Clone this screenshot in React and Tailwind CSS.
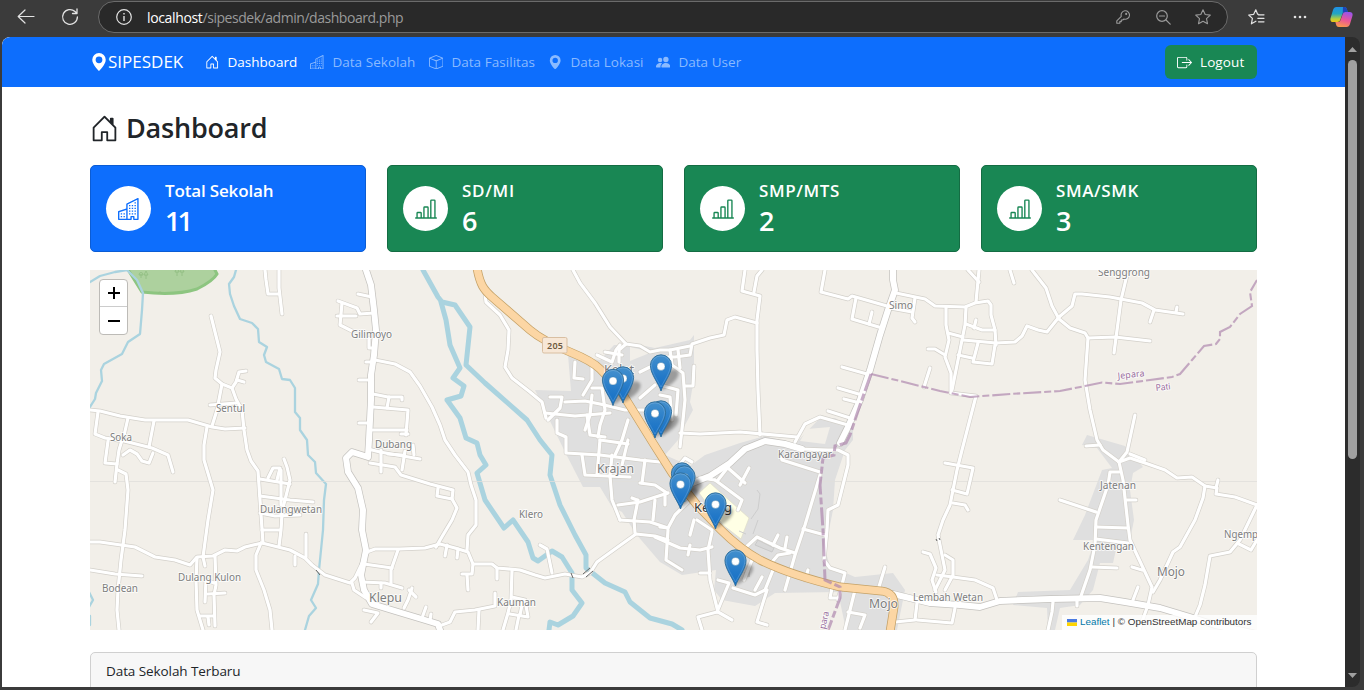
import React from "react";
import {
  BsHouseDoor,
  BsBuildings,
  BsBox,
  BsGeoAltFill,
  BsBoxArrowRight,
  BsBarChartLine,
} from "react-icons/bs";

const urban = [
  "535,390 571,391 568,355 600,360 614,345 640,345 655,348 690,340 694,335 694,378 690,402 693,410 685,425 678,440 665,455 690,466 705,455 740,443 765,436 795,444 820,418 835,418 853,428 853,440 845,450 835,480 833,510 825,550 830,566 855,577 893,573 905,590 897,630 846,630 838,592 775,593 755,606 722,600 714,590 716,570 682,575 660,562 636,534 622,512 612,507 600,487 583,487 565,452",
  "1082,445 1087,435 1125,446 1143,467 1133,473 1130,490 1134,520 1130,540 1117,545 1113,563 1100,563 1093,590 1080,605 1060,608 1055,630 1048,630 1047,608 1013,605 1018,592 1070,590 1088,560 1095,540 1073,540 1085,515 1102,470 1112,468 1097,448",
];

const streams = [
  "90,282 100,276 115,272 127,270 137,280 143,293 142,310 140,334 128,342 122,354 104,364 101,370 102,381 96,393 95,399 90,407",
  "236,270 234,277 229,284 230,294 234,306 240,319 252,323 258,329 259,342 267,347 264,355 266,362 279,369 282,379 290,380 295,388 295,412 300,418 300,430 307,440 308,455 315,462 316,473 326,484 324,500 323,530 319,570 318,584 311,600 316,608 309,616 305,630",
  "88,590 93,600 89,607",
  "90,616 90,625",
];

const rivers = [
  "423,270 438,297 442,302 455,305 470,327 466,365 485,383 527,420 540,440 552,455 550,475 560,505 575,535 586,555 586,568 605,583 625,592 630,602 650,618 672,624 682,630",
  "441,302 446,320 450,345 460,368 453,378 464,386 461,396 447,400 460,418 466,438 477,443 480,455 486,465 477,473 485,500 504,528 513,520 528,542 533,558 538,561 552,551 562,557 572,573 572,590 582,603 573,616 558,625 550,622 549,630",
];

const minor = [
  "265,270 266,280 268,294 279,294", "279,270 279,288 282,314",
  "211,316 217,340 220,352 216,370 215,378 222,384 232,388 236,399 242,410 244,430 247,450 251,461 258,471 260,500 263,543",
  "246,371 239,372 236,382 232,388", "244,382 237,380", "222,384 217,410 212,426", "210,405 236,403",
  "90,410 100,411 120,416 145,420 188,420 212,427 225,429 245,428",
  "98,412 95,434 105,438 124,441 152,448 168,455 173,472", "128,418 123,440", "154,421 149,447",
  "207,427 204,445 204,460 213,490 208,520 203,557",
  "108,441 105,463 117,464 119,450 122,440", "117,464 115,482", "118,470 126,474 128,490 125,530 121,560 118,590 117,610 119,630",
  "123,455 130,450 137,454 142,461 149,463 153,453",
  "90,542 100,542 135,547 155,557 175,560 190,565 197,557 213,556 225,550 237,551 245,547 262,543 290,550 305,558 312,565 325,575 350,583 355,578 367,553",
  "90,570 115,574 142,576", "203,557 205,566", "197,558 196,580 197,610 203,630", "215,556 216,585 214,595 215,626",
  "205,602 206,580 214,583", "208,594 225,593", "200,616 214,616", "208,617 209,625",
  "261,543 256,555 256,570 264,590 270,610 272,630",
  "260,479 290,484", "260,496 290,500 313,502", "260,513 275,516 300,515", "282,514 281,530 279,546", "262,530 280,530",
  "284,459 287,467 290,480 285,500 281,515", "268,478 273,468 280,468 277,480", "281,470 281,505", "306,534 306,557", "295,556 295,565",
  "358,294 372,297", "338,301 357,308 360,314 374,313", "342,303 340,325 352,331", "337,316 356,316", "369,338 369,348 374,348",
  "366,362 374,362", "359,380 372,380", "359,423 370,423",
  "375,360 395,364 410,372 420,386 432,407 440,425 445,440 455,455 468,472 471,485 476,500 476,525 468,535 467,550",
  "373,394 388,397 402,397 402,400", "389,397 387,408", "373,407 408,410 406,435", "373,430 407,430", "401,434 408,434",
  "368,449 380,452 420,459", "370,463 395,467 401,475 430,484 453,490 452,499 437,496 438,488",
  "452,499 457,508 452,520 443,535 436,547", "381,450 381,472", "388,454 402,455", "405,451 402,470", "413,445 414,455",
  "367,552 375,549 400,549 425,548 440,544 455,548 468,552 473,564 492,564 497,568 520,570 535,575 545,578 565,574 582,577 590,573 597,562 615,549 636,534 655,536 668,540",
  "447,545 445,556", "458,549 457,558", "473,564 472,574 462,574", "467,575 468,590", "497,568 497,579", "512,571 511,600 508,613 503,630",
  "540,545 547,549 552,573", "442,625 450,622 455,612 475,610 495,606 495,593", "479,610 478,630", "512,597 525,600 528,617 510,614",
  "523,600 520,615", "519,615 516,630", "364,564 392,568", "398,550 391,570 391,583", "362,582 385,583 402,588", "381,583 381,588",
  "412,588 408,600 404,608", "409,590 416,597", "426,607 422,618", "431,614 430,620", "364,610 378,613 371,622", "352,583 354,590 366,598",
  "485,293 486,302 500,315 509,330 508,350 505,367 512,378 530,392 542,402 546,418",
  "573,270 580,283 595,303 610,327 626,344 640,346 650,352 660,350 670,350 690,346",
  "626,344 619,350 619,362",
  "745,270 742,291 760,296 757,320 757,350 758,390 760,435", "762,270 757,276 754,292",
  "757,323 735,317 727,320 724,335 710,338 692,344 690,355 675,357 665,357",
  "825,270 821,292 848,299 852,296 887,306", "856,298 852,319 882,328", "872,312 869,324", "842,367 867,374", "838,388 862,395",
  "844,399 856,402", "828,411 850,418", "795,442 805,424 820,417 848,425", "680,433 700,434 740,432 797,437",
  "896,293 925,299 935,306 965,307 975,303 988,301 991,305 991,315 995,330 996,345", "915,298 912,318 915,322", "890,308 912,312",
  "946,308 946,325 949,340 945,357 951,373 951,392", "948,333 963,337", "928,349 935,349 945,355", "930,368 924,387",
  "979,270 976,302", "968,270 979,282", "1010,270 1014,283",
  "1032,270 1046,288 1052,306 1059,319 1070,328 1085,333 1088,338 1085,380 1090,410 1097,440 1103,450 1119,462",
  "1059,317 1072,306 1075,294 1082,294 1110,297 1142,303 1155,310 1183,314", "1154,310 1150,322", "1177,307 1176,312",
  "1059,317 1047,332 1038,330 1027,326 1022,336 1015,342 996,343 963,340", "966,308 965,325 960,350 952,390",
  "966,324 982,330 995,330", "976,320 974,328", "978,343 973,362 992,364 995,345", "958,355 972,358",
  "951,393 976,396 962,450 957,470 950,505 943,520 938,535 941,550 945,570 935,590", "1127,275 1121,300 1114,353",
  "1088,338 1115,337 1150,341", "1135,415 1127,452 1119,462",
  "945,463 973,468 967,494 952,490", "953,503 965,505 968,510", "945,555 953,560 953,575 945,590", "923,552 930,554 936,568 932,580 936,592",
  "937,575 953,577 975,580 993,588 997,600",
  "1086,446 1100,445", "1119,462 1123,480 1128,525 1130,540 1152,587 1148,605 1139,630",
  "1119,472 1110,472 1108,485 1096,520 1095,545 1090,570 1081,596", "1060,500 1096,512", "1127,500 1136,500", "1096,527 1128,528",
  "1096,539 1128,543", "1092,567 1117,568", "1132,567 1142,570",
  "1119,462 1130,458 1145,463 1165,470 1177,478 1192,477 1205,486 1217,488 1216,494 1235,497 1257,505", "1130,454 1145,460", "1218,480 1216,488",
  "1205,486 1203,498 1195,520 1180,547 1173,552 1160,580 1153,592", "1257,505 1240,540 1230,552 1210,556 1205,585 1200,605 1195,617",
  "1239,544 1251,550 1257,540", "1138,587 1133,600", "1053,602 1052,612 1048,630", "1077,600 1077,606",
  "917,603 915,620 895,622", "917,620 952,623 955,608",
  "545,413 575,416 610,413", "550,397 562,397 560,408 548,420", "565,402 585,401 600,404 625,410 645,410",
  "557,420 557,433 566,437 566,453 600,455 640,460 660,462", "587,415 590,435 605,437", "592,395 590,415 585,430",
  "575,362 574,378 583,379", "592,362 592,380 583,395", "592,388 602,388 605,410 600,425 598,437", "597,355 612,362 616,350 620,345",
  "605,352 622,355", "628,420 622,440 615,455", "582,455 585,475 630,477", "600,440 597,475", "628,440 622,465", "600,440 628,444",
  "612,455 610,476 612,500 620,520", "640,483 655,485 667,493", "618,505 640,502 668,493", "638,500 634,520 635,533",
  "620,520 650,522 668,528", "655,500 653,520", "645,460 642,483", "665,493 665,505", "632,498 637,500",
  "670,350 672,365 683,373 685,400 683,420 680,447", "694,366 693,386 685,386", "660,385 678,390 676,415", "660,395 670,397 672,420", "678,350 680,368",
  "640,372 660,362", "640,398 655,385", "675,470 685,458 692,462", "715,480 742,500 738,510", "735,458 718,480", "749,468 740,485", "728,468 745,483", "700,478 715,480",
  "660,527 668,528 675,515 690,500", "655,537 680,548 700,550 712,547", "668,530 666,560 682,570", "694,520 690,535", "690,545 688,555",
  "697,520 712,530", "712,532 708,550 710,580 718,612 732,620", "700,573 710,573", "717,612 729,583 718,580", "717,612 698,617 702,630",
  "733,588 755,595 765,590 775,565", "752,560 744,580", "755,590 762,577", "767,590 757,622 767,625", "745,548 757,537 780,548 795,553",
  "773,545 778,535", "785,548 787,537", "785,590 795,555 805,525 820,475", "803,529 825,535", "780,452 782,460 820,472", "772,562 778,555 790,553",
  "805,580 808,570", "855,590 850,610 845,630", "878,590 885,567", "832,588 830,598 838,598", "848,612 865,615 860,628",
  "800,449 828,450 838,450 848,455 848,465 838,505 828,510 827,530 824,560 830,568 845,573 838,600",
];

const major = [
  "366,270 371,285 374,310 376,330 374,355 371,375 371,400 369,440 368,457 352,452 346,458 348,472 358,488 363,510 362,530 366,550 361,575 364,590 372,604 395,611 425,620 438,624 440,630",
  "893,268 893,280 895,290 888,310 880,335 870,370 860,400 848,427 840,443",
  "690,484 710,476 730,463 745,449 765,441 785,444 802,449",
  "893,594 930,603 960,605 980,607 1000,601 1050,599 1100,598 1125,602 1160,608 1190,617 1215,625 1257,634",
];

const trunk =
  "M477,268 C480,285 484,290 492,297 L530,330 Q543,341 570,352 Q592,361 600,369 Q612,381 622,393 L653,443 L672,473 L697,505 L721,530 Q740,549 760,560 Q790,575 840,587 L882,591 Q895,593 894,607 L890,632";

const labels = [
  ["Soka", 110, 441, 22, 10], ["Sentul", 216, 412, 29, 10], ["Dulangwetan", 260, 513, 62, 10], ["Dulang Kulon", 178, 581, 63, 10],
  ["Bodean", 102, 592, 36, 10], ["Gilimoyo", 351, 338, 41, 10], ["Dubang", 375, 448, 37, 10], ["Krajan", 597, 473, 37, 12],
  ["Klero", 519, 518, 24, 10], ["Klepu", 369, 602, 33, 13], ["Kauman", 497, 606, 39, 10], ["Kelet", 604, 374, 30, 12],
  ["Karangayar", 778, 458, 54, 10], ["Simo", 889, 309, 24, 10], ["Senggrong", 1098, 276, 52, 10],
  ["Jatenan", 1100, 489, 36, 10], ["Kentengan", 1083, 550, 51, 10], ["Ngemp", 1224, 538, 34, 10], ["Mojo", 1157, 576, 28, 13],
  ["Mojo", 869, 608, 29, 13], ["Lembah Wetan", 913, 601, 70, 10],
];

const markers = [
  [661, 391], [623, 403], [613, 405.5], [661, 437], [655, 438], [682, 499], [684.5, 502], [680.5, 509], [715.5, 529], [735.5, 586],
];

function Lines({ items, className, width }) {
  return items.map((p, i) => (
    <polyline key={i} points={p} className={className} strokeWidth={width} fill="none" strokeLinecap="round" strokeLinejoin="round" />
  ));
}

function VillageMap() {
  return (
    <svg viewBox="90 270 1167 360" className="block h-full w-full" fontFamily="'Noto Sans', sans-serif">
      <defs>
        <linearGradient id="pin" x1="0" y1="0" x2="0" y2="1">
          <stop offset="0" stopColor="#4490cd" />
          <stop offset="0.6" stopColor="#2379c8" />
          <stop offset="1" stopColor="#126fc6" />
        </linearGradient>
        <filter id="soft" x="-30%" y="-30%" width="160%" height="160%">
          <feGaussianBlur stdDeviation="1.6" />
        </filter>
      </defs>
      <rect x="90" y="270" width="1167" height="360" fill="#f2efe9" />
      {urban.map((p) => <polygon key={p} points={p} fill="#dfdfdf" />)}
      <polygon points="807,429 830,427 825,444 800,441" fill="#f2efe9" />
      <polygon points="630,347 652,352 630,361" fill="#f2efe9" />
      <path d="M127,268 L142,292 Q175,296 197,289 Q213,281 217,274 L214,268Z" fill="#add19e" stroke="#8dc580" strokeWidth="3" />
      <g stroke="#8fbd80" fill="none" strokeWidth="0.8">
        <path d="M141,278v-4m-2,1a2,2.5 0 1 1 4,0zM146,279v-4m-2,0l2,-4 2,4zM177,276v-4m-2,0a2,2.5 0 1 1 4,0zM182,276v-4m-2,0l2,-4 2,4zM158,294a2,2 0 0 1 4,0" />
      </g>
      <polygon points="710,483 749,518 741,539 723,525 699,493" fill="#ffffe5" stroke="#dedcc8" strokeWidth="0.7" />
      <path d="M757,490l3,4-2,15-7,10M758,520l-5,14M746,534l-7,-3" stroke="#cdcdcd" fill="none" strokeWidth="1" />
      <path d="M755,545l3,-5 16,8-2,4z" stroke="#c4c4c4" fill="#d8d8d8" strokeWidth="0.8" />
      <rect x="744" y="572" width="6" height="5" fill="#c3c3c3" />
      <Lines items={streams} className="stroke-[#aad3df]" width="2.3" />
      <Lines items={rivers} className="stroke-[#aad3df]" width="5" />
      <path d="M90,481.5H1257" stroke="#dfdedb" strokeWidth="0.8" />
      <Lines items={minor} className="stroke-[#d3d0ca]" width="4.5" />
      <Lines items={major} className="stroke-[#c4c2be]" width="7.4" />
      <Lines items={minor} className="stroke-white" width="3.2" />
      <Lines items={major} className="stroke-white" width="6" />
      <path d="M583,574l7,-6M586,577l7,-6M571,573l2,5M316,570l4,5M936,539l1,2M939,538l1,2" stroke="#666" strokeWidth="1" fill="none" />
      <path d={trunk} fill="none" stroke="#c4a166" strokeWidth="8.8" />
      <path d={trunk} fill="none" stroke="#fcd6a4" strokeWidth="7.3" />
      <g fill="none" stroke="#ad85ad" strokeOpacity="0.68" strokeWidth="2.1">
        <polyline strokeDasharray="18 3 7 3" points="871,374 900,381 940,391 970,397 1010,394 1060,391 1085,386 1102,382.5 1120,384 1150,380 1172,377 1180,374 1192,360 1204,346 1216,344 1220,339 1220,332 1230,327 1240,314 1252,306 1250,292 1257,280" />
        <polyline strokeDasharray="18 3 7 3" strokeWidth="3" points="871,374 860,405 850,435 846,443 835,446 834,455 823,458 820,485 823,530 825,580 840,587 840,598 830,625 828,630" />
      </g>
      <g fill="#7d7d7d" stroke="#fff" strokeOpacity="0.75" strokeWidth="1.8" paintOrder="stroke" strokeLinejoin="round">
        {labels.map(([t, x, y, w, s]) => (
          <text key={t + x} x={x} y={y} fontSize={s} textLength={w} lengthAdjust="spacingAndGlyphs">{t}</text>
        ))}
        <text x="694" y="512" fontSize="13" textLength="38" lengthAdjust="spacingAndGlyphs" fill="#3a3a3a">Keling</text>
        <g fill="#9b70a0" fontSize="9">
          <text transform="translate(1118 379) rotate(-6)" textLength="27">Jepara</text>
          <text transform="translate(1156 391) rotate(-7)" textLength="15">Pati</text>
          <text transform="translate(825 629.5) rotate(-77)" textLength="18">para</text>
        </g>
      </g>
      <rect x="542.5" y="337.5" width="24.5" height="15.5" rx="1.5" fill="#f7e7d6" stroke="#d9bfa2" />
      <text x="547" y="349" fontSize="9" fontWeight="600" fill="#6f5a40" textLength="16">205</text>
      {markers.map(([x, y]) => (
        <path key={"s" + x + y} d={`M${x},${y} l6,-4 q14,-9 11,-16 q-6,-5 -13,4 z`} fill="#000" opacity="0.3" filter="url(#soft)" />
      ))}
      {markers.map(([x, y]) => (
        <g key={x + "-" + y} transform={`translate(${x} ${y})`}>
          <path d="M0,0 C-2,-7 -10.6,-17 -10.6,-25.6 A10.6,10.6 0 0 1 10.6,-25.6 C10.6,-17 2,-7 0,0Z" fill="url(#pin)" stroke="#2e6c97" strokeWidth="0.9" />
          <path d="M0,-4 C-3,-10 -9.5,-19 -9.5,-25.6 A9.5,9.5 0 0 1 9.5,-25.6 C9.5,-19 3,-10 0,-4Z" fill="none" stroke="#fff" strokeOpacity="0.16" />
          <circle cy="-24.6" r="4" fill="#fff" stroke="#2e6c97" strokeOpacity="0.6" strokeWidth="0.6" />
        </g>
      ))}
    </svg>
  );
}

function Toolbar() {
  return (
    <div className="flex h-[37px] shrink-0 items-start bg-[#3b3b3b] text-[#e3e3e3]">
      <svg className="ml-[17px] mt-[9px] h-4 w-[18px]" viewBox="0 0 18 16" fill="none" stroke="currentColor" strokeWidth="1.2" strokeLinecap="round" strokeLinejoin="round">
        <path d="M17 7.5H1.2M8 1L1.2 7.5 8 14" />
      </svg>
      <svg className="ml-[26px] mt-2 h-[18px] w-[18px]" viewBox="0 0 18 18" fill="none" stroke="currentColor" strokeWidth="1.3" strokeLinecap="round" strokeLinejoin="round">
        <path d="M16.4 9A7.4 7.4 0 1 1 14 3.5L15.8 5.2M16 1v4.5h-4.5" />
      </svg>
      <div className="ml-[19px] mt-px flex h-8 w-[1130px] items-center rounded-full border border-[#6b6b6b] bg-[#292929] pr-4">
        <svg className="ml-[17px] h-4 w-4" viewBox="0 0 16 16" fill="none" stroke="currentColor" strokeWidth="1.2">
          <circle cx="8" cy="8" r="7.3" />
          <path d="M8 7v5M8 4v1.5" strokeWidth="1.4" />
        </svg>
        <div className="ml-[15px] flex-1 whitespace-nowrap text-[14px] tracking-[-0.46px] text-[#9a9a9a]">
          <span className="tracking-[-0.35px] text-white">localhost</span>/sipesdek/admin/dashboard.php
        </div>
        <svg className="h-[14px] w-[14px] text-[#9a9a9a]" viewBox="0 0 14 14" fill="none" stroke="currentColor" strokeWidth="1.1" strokeLinejoin="round">
          <path d="M5.3 6.3A4.2 4.2 0 1 1 8 9L6.700 10H5.300v1.600H3.800V13.200H.8V10.800z" />
          <circle cx="10.2" cy="3.9" r=".5" fill="currentColor" />
        </svg>
        <svg className="ml-[26px] h-[15px] w-[15px] text-[#9a9a9a]" viewBox="0 0 15 15" fill="none" stroke="currentColor" strokeWidth="1.2" strokeLinecap="round">
          <circle cx="6" cy="6" r="5.3" />
          <path d="M3.5 6h5M10 10l4.2 4.2" />
        </svg>
        <svg className="ml-[24px] h-4 w-4 text-[#9a9a9a]" viewBox="0 0 16 16" fill="none" stroke="currentColor" strokeWidth="1.1" strokeLinejoin="round">
          <path d="M8 .8l2.2 4.7 5.1.6-3.8 3.5 1 5.1L8 12.2l-4.5 2.5 1-5.1L.7 6.1l5.1-.6z" />
        </svg>
      </div>
      <svg className="ml-[20px] mt-[9px] h-4 w-[17px]" viewBox="0 0 17 16" fill="none" stroke="currentColor" strokeWidth="1.2" strokeLinejoin="round" strokeLinecap="round">
        <path d="M11 5.5L9.6 5.2 7.8.8 5.7 5.3.7 6l3.7 3.4-1 5.4 4.5-2.6M10.5 5.8H16M9.8 9.3H16M10.5 12.8H16" />
      </svg>
      <svg className="ml-[28px] mt-[15px] h-1 w-[14px]" viewBox="0 0 14 4" fill="currentColor">
        <circle cx="2" cy="2" r="1.3" /><circle cx="7" cy="2" r="1.3" /><circle cx="12" cy="2" r="1.3" />
      </svg>
      <svg className="ml-[23px] mt-[6px] h-[22px] w-[23px]" viewBox="0 0 23 22">
        <defs>
          <linearGradient id="cpa" x1="0" y1="0" x2="0" y2="1">
            <stop offset="0" stopColor="#1f8fe8" /><stop offset=".45" stopColor="#22a6c0" /><stop offset=".8" stopColor="#b8cf3a" /><stop offset="1" stopColor="#f2c313" />
          </linearGradient>
          <linearGradient id="cpb" x1=".6" y1="0" x2=".3" y2="1">
            <stop offset="0" stopColor="#9b54e8" /><stop offset=".5" stopColor="#ea5597" /><stop offset="1" stopColor="#fb9a4b" />
          </linearGradient>
        </defs>
        <path d="M6.5 1H14c2 0 2.6 1.3 3.1 3l.5 2h-2.3c-1.7 0-2.6 1-3.1 2.6L10.6 13c-.6 2-1.4 3-3.2 3H3.2C1 16-.1 14.500.6 12L3 4C3.700 2 4.700 1 6.500 1z" fill="url(#cpa)" />
        <path d="M13 1h1.500c1.600 0 2.300 1.300 2.800 3l.6 2h-2.500c-1.300 0-2.200.6-2.700 1.900z" fill="#1e45b8" />
        <path d="M16.500 21H9c-2 0-2.600-1.300-3.100-3l-.5-2h2.300c1.700 0 2.600-1 3.100-2.600L12.400 9c.6-2 1.400-3 3.200-3h4.200c2.200 0 3.300 1.500 2.600 4L20 18c-.7 2-1.700 3-3.500 3z" fill="url(#cpb)" />
      </svg>
    </div>
  );
}

function PeopleIcon({ className }) {
  return (
    <svg className={className} viewBox="0 0 16 16" fill="currentColor">
      <path d="M7 14s-1 0-1-1 1-4 5-4 5 3 5 4-1 1-1 1H7zm4-6a3 3 0 1 0 0-6 3 3 0 0 0 0 6z" />
      <path fillRule="evenodd" d="M5.216 14A2.238 2.238 0 0 1 5 13c0-1.355.68-2.750 1.936-3.720A6.325 6.325 0 0 0 5 9c-4 0-5 3-5 4s1 1 1 1h4.216z" />
      <path d="M4.500 8a2.500 2.500 0 1 0 0-5 2.500 2.500 0 0 0 0 5z" />
    </svg>
  );
}

function NavLink({ icon: Icon, children, className }) {
  return (
    <a className={"flex items-center whitespace-nowrap text-[13.5px] tracking-[0.04px] " + className}>
      <Icon className="mr-[8px] h-[14.4px] w-[14.4px] shrink-0" />
      {children}
    </a>
  );
}

function Navbar() {
  return (
    <nav className="flex h-[50px] shrink-0 items-center rounded-tl-lg bg-[#0d6efd] pl-[88px] pr-[88px] text-white">
      <a className="flex w-[109px] items-center whitespace-nowrap text-[17px] tracking-[0px]">
        <BsGeoAltFill className="h-[18px] w-[18px] shrink-0" />
        SIPESDEK
      </a>
      <div className="flex flex-1 items-center pl-[6px] text-[#8abaff]">
        <NavLink icon={BsHouseDoor} className="w-[105px] text-white">Dashboard</NavLink>
        <NavLink icon={BsBuildings} className="w-[119px]">Data Sekolah</NavLink>
        <NavLink icon={BsBox} className="w-[119px]">Data Fasilitas</NavLink>
        <NavLink icon={BsGeoAltFill} className="w-[108px]">Data Lokasi</NavLink>
        <NavLink icon={PeopleIcon} className="w-[90px]">Data User</NavLink>
      </div>
      <button className="flex h-[34px] w-[92px] items-center rounded-[6px] bg-[#198754] pl-[12px] text-[13.5px] tracking-[0.1px]">
        <BsBoxArrowRight className="mr-[8px] h-[15px] w-[15px]" />
        Logout
      </button>
    </nav>
  );
}

const stats = [
  { title: "Total Sekolah", value: 11, icon: BsBuildings, box: "bg-[#0d6efd] border-[#0b5cd4]", ink: "text-[#0d6efd]", track: "tracking-[-0.16px]", digits: "tracking-[-3px]" },
  { title: "SD/MI", value: 6, icon: BsBarChartLine, box: "bg-[#198754] border-[#146c43]", ink: "text-[#198754]", track: "tracking-[0.7px]", digits: "" },
  { title: "SMP/MTS", value: 2, icon: BsBarChartLine, box: "bg-[#198754] border-[#146c43]", ink: "text-[#198754]", track: "tracking-[0.6px]", digits: "" },
  { title: "SMA/SMK", value: 3, icon: BsBarChartLine, box: "bg-[#198754] border-[#146c43]", ink: "text-[#198754]", track: "tracking-[0.6px]", digits: "" },
];

function StatCard({ title, value, icon: Icon, box, ink, track, digits }) {
  return (
    <div className={"flex h-[87px] items-center rounded-[5px] border pl-[15px] text-white " + box}>
      <div className={"flex h-[45px] w-[45px] items-center justify-center rounded-full bg-white " + ink}>
        <Icon className="h-[22px] w-[22px]" />
      </div>
      <div className="ml-[14px] font-semibold">
        <div className={"text-[17px] leading-[22px] " + track}>{title}</div>
        <div className={"mt-[3px] text-[27px] leading-[32px] " + digits}>{value}</div>
      </div>
    </div>
  );
}

export default function App() {
  return (
    <div className="flex h-[690px] w-[1364px] flex-col overflow-hidden bg-[#3b3b3b] font-['Open_Sans','Noto_Sans',sans-serif]">
      <Toolbar />
      <div className="mb-[3px] ml-[2px] mr-[4px] flex min-h-0 flex-1 overflow-hidden rounded-t-lg rounded-br-lg bg-[#2c2c2c]">
        <main className="flex w-[1343px] flex-col overflow-hidden bg-white text-[#212529]">
          <Navbar />
          <div className="px-[88px]">
            <h1 className="mt-[23px] flex h-9 items-center text-[27px] font-semibold tracking-[-0.2px]">
              <BsHouseDoor className="mr-[7px] h-[29px] w-[29px]" />
              Dashboard
            </h1>
            <div className="mt-[19px] grid grid-cols-4 gap-[21px]">
              {stats.map((s) => <StatCard key={s.title} {...s} />)}
            </div>
            <div className="relative mt-[18px] h-[360px]">
              <VillageMap />
              <div className="absolute left-[9px] top-[9px] flex w-[29px] flex-col overflow-hidden rounded-[4px] border border-[#bdbbb7] bg-white text-black">
                <div className="flex h-[27px] items-center justify-center border-b border-[#ccc] pl-px">
                  <svg className="h-[12px] w-[12px]" viewBox="0 0 12 12" stroke="currentColor" strokeWidth="2"><path d="M0 6H12M6 0V12" /></svg>
                </div>
                <div className="flex h-[27px] items-center justify-center pl-px">
                  <svg className="h-[11px] w-[12px]" viewBox="0 0 12 11" stroke="currentColor" strokeWidth="2"><path d="M0 6H12" /></svg>
                </div>
              </div>
              <div className="absolute bottom-0 right-0 flex h-[15px] w-[195px] items-center whitespace-nowrap bg-white/80 pl-[5px] font-['Liberation_Sans',Arial,sans-serif] text-[9.85px] text-[#333]">
                <svg className="mr-[3px] h-[7px] w-[10px]" viewBox="0 0 10 7"><path fill="#4c7be1" d="M0 0h10v3.500H0z" /><path fill="#ffd500" d="M0 3.500h10V7H0z" /></svg>
                <span className="text-[#0078a8]">Leaflet</span>
                <span className="ml-[3px]">| © OpenStreetMap contributors</span>
              </div>
            </div>
            <section className="mt-[22px] h-[60px] rounded-t-[5px] border border-[#d0d0d0] bg-[#f7f7f7] pl-[15px] text-[13.5px] leading-[37px] tracking-[-0.08px]">
              Data Sekolah Terbaru
            </section>
          </div>
        </main>
        <div className="flex w-[15px] flex-col items-center justify-between pb-[9px] pt-[10px]">
          <svg className="h-[5px] w-[9px]" viewBox="0 0 9 5"><path d="M4.500 0L9 5H0z" fill="#a0a0a0" /></svg>
          <div className="mt-2 h-[399px] w-[9px] rounded-full bg-[#9f9f9f]" />
          <div className="flex-1" />
          <svg className="h-[5px] w-[9px]" viewBox="0 0 9 5"><path d="M0 0H9L4.500 5z" fill="#a0a0a0" /></svg>
        </div>
      </div>
    </div>
  );
}
